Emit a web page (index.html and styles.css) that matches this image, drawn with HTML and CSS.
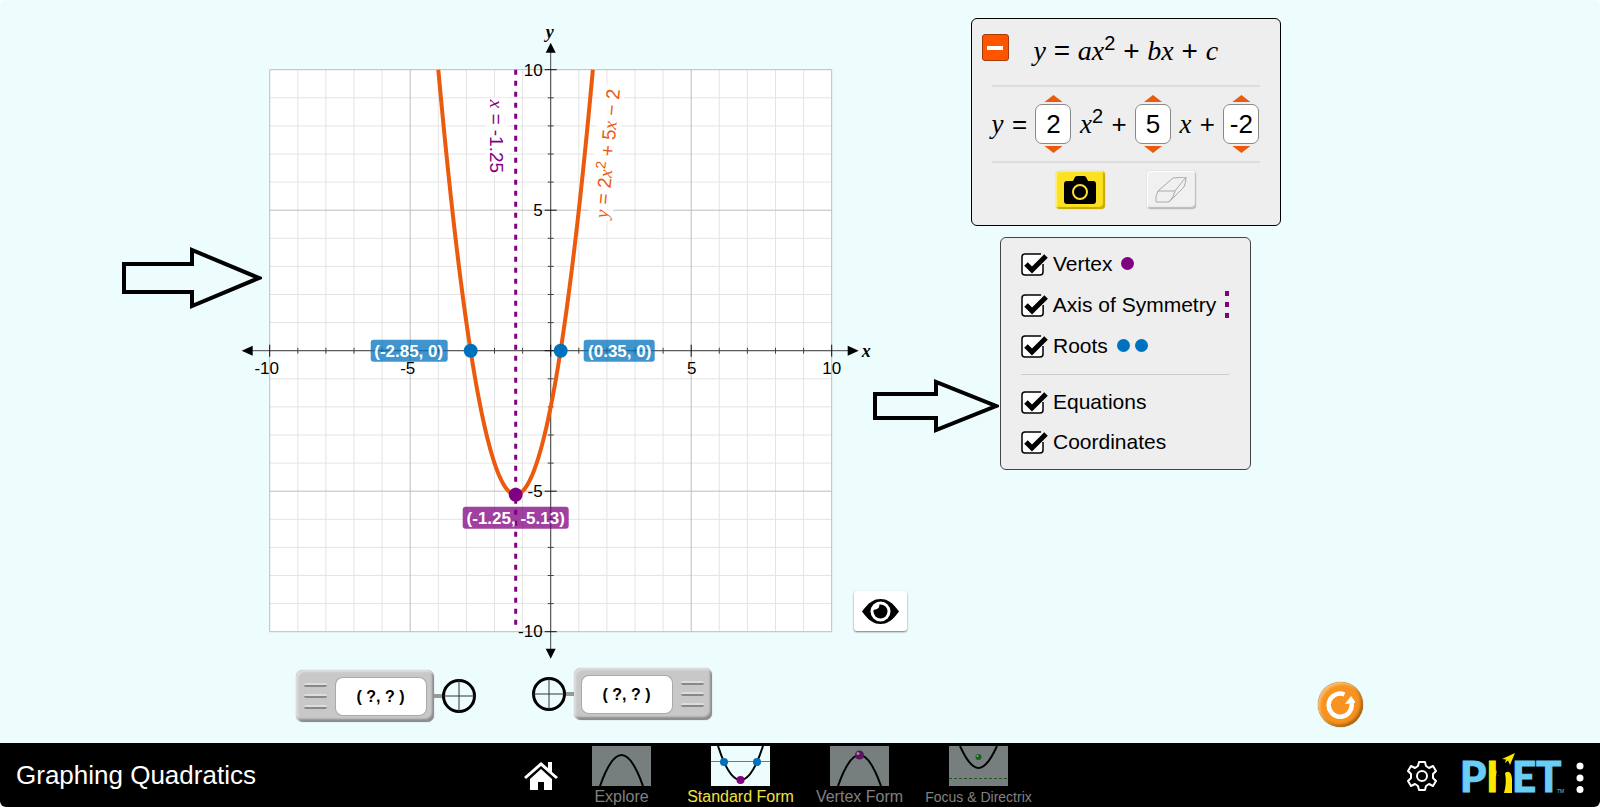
FILE: index.html
```html
<!DOCTYPE html>
<html lang="en">

<head>
    <meta charset="UTF-8">
    <meta name="viewport" content="width=device-width, initial-scale=1.0">
    <title>Graphing Quadratics</title>
    <link rel="stylesheet" href="styles.css">
</head>

<body>

    <main class="sim">
        <section class="graph-area">
            <svg class="graph" width="616" height="648" role="img" aria-label="Graph of y = 2x² + 5x − 2">
                <g transform="translate(312.7 330.7)">
                    <rect class="plot" x="-281" y="-281" width="562" height="562" />
                    <path class="grid-minor" id="gridMinor" />
                    <path class="grid-major" id="gridMajor" />
                    <path class="axis" d="M-301 0H301M0 -301V301" />
                    <path class="axis" id="ticks" />
                    <path class="major-tick" id="majorTicks" />
                    <path d="M-309 0l11 -5v10zM308 0l-11 -5v10zM0 -308l-5 10h10zM0 308l-5 -10h10z" />
                    <g class="numbers">
                        <text x="-284" y="23" text-anchor="middle">-10</text>
                        <text x="-143" y="23" text-anchor="middle">-5</text>
                        <text x="141" y="23" text-anchor="middle">5</text>
                        <text x="281" y="23" text-anchor="middle">10</text>
                        <text x="-8" y="-275" text-anchor="end">10</text>
                        <text x="-8" y="-135" text-anchor="end">5</text>
                        <text x="-8" y="146" text-anchor="end">-5</text>
                        <text x="-8" y="286" text-anchor="end">-10</text>
                    </g>
                    <text class="axis-name" x="311" y="6">x</text>
                    <text class="axis-name" x="-5" y="-313">y</text>
                    <path class="curve" id="curve" />
                    <path class="symmetry" d="M-35 -281V277" />
                    <g transform="translate(-61 -251) rotate(90)">
                        <rect class="label-back" x="-2" y="-18" width="78" height="22" />
                        <text class="symmetry-text"><tspan class="var">x</tspan> = -1.25</text>
                    </g>
                    <g transform="translate(57 -132) rotate(-84.6)">
                        <rect class="label-back" x="-2" y="-20" width="136" height="25" />
                        <text class="curve-text"><tspan class="var">y</tspan> = 2<tspan class="var">x</tspan><tspan class="sup" dy="-7">2</tspan><tspan dy="7"> + 5</tspan><tspan class="var">x</tspan> − 2</text>
                    </g>
                    <circle class="root" cx="-80" cy="0" r="7" />
                    <circle class="root" cx="10" cy="0" r="7" />
                    <circle class="vertex" cx="-35" cy="144" r="7" />
                    <g class="coords">
                        <rect class="root-back" x="-180" y="-11" width="77" height="22" rx="3" />
                        <text x="-142" y="6">(-2.85, 0)</text>
                        <rect class="root-back" x="33" y="-11" width="71" height="22" rx="3" />
                        <text x="69" y="6">(0.35, 0)</text>
                        <rect class="vertex-back" x="-88" y="156" width="106" height="22" rx="3" />
                        <text x="-35" y="173">(-1.25, -5.13)</text>
                    </g>
                </g>
            </svg>
            <svg class="pointer pointer-graph" width="142" height="62">
                <path d="M4 17H72V3L139 31L72 59V45H4z" />
            </svg>

            <div class="sensors">
                <div class="sensor">
                    <div class="sensor-body">
                        <div class="grip"><i></i><i></i><i></i></div>
                        <div class="screen">( ?, ? )</div>
                    </div>
                    <div class="stem"></div>
                    <svg width="34" height="34"><circle cx="17" cy="17" r="15.500" /><path d="M1 17H33M17 1V33" /></svg>
                </div>
                <div class="sensor flipped">
                    <div class="sensor-body">
                        <div class="grip"><i></i><i></i><i></i></div>
                        <div class="screen">( ?, ? )</div>
                    </div>
                    <div class="stem"></div>
                    <svg width="34" height="34"><circle cx="17" cy="17" r="15.500" /><path d="M1 17H33M17 1V33" /></svg>
                </div>
            </div>
        </section>

        <button class="eye" type="button" aria-label="Hide curves">
            <svg width="37" height="25" viewBox="0 0 37 25">
                <path d="M0 12.500C7 3 12 0 18.500 0S30 3 37 12.500C30 22 25 25 18.500 25S7 22 0 12.500z" />
                <circle cx="18.500" cy="12.500" r="10" fill="#fff" />
                <circle cx="18.500" cy="12.500" r="7" />
                <path d="M11 11A7 7 0 0 1 17 5Q19 10 11 11z" fill="#fff" />
            </svg>
        </button>

        <section class="controls">
            <div class="panel equation-panel">
                <div class="formula">
                    <button class="collapse" type="button" aria-label="Collapse"></button>
                    <p class="standard"><i>y</i> = <i>ax</i><sup>2</sup> + <i>bx</i> + <i>c</i></p>
                </div>
                <div class="values">
                    <i>y</i><span>=</span>
                    <div class="picker">
                        <button class="up" type="button" aria-label="Increase a"></button>
                        <input type="text" value="2" aria-label="a">
                        <button class="down" type="button" aria-label="Decrease a"></button>
                    </div>
                    <span class="square"><i>x</i><sup>2</sup></span><span>+</span>
                    <div class="picker">
                        <button class="up" type="button" aria-label="Increase b"></button>
                        <input type="text" value="5" aria-label="b">
                        <button class="down" type="button" aria-label="Decrease b"></button>
                    </div>
                    <i>x</i><span>+</span>
                    <div class="picker">
                        <button class="up" type="button" aria-label="Increase c"></button>
                        <input type="text" value="-2" aria-label="c">
                        <button class="down" type="button" aria-label="Decrease c"></button>
                    </div>
                </div>
                <div class="actions">
                    <button class="camera" type="button" aria-label="Save curve">
                        <svg width="32" height="28" viewBox="0 0 32 28">
                            <path d="M3 5h6l2-4q1-1 2-1h7q1 0 2 1l2 4h5q3 0 3 3v17q0 3-3 3H3q-3 0-3-3V8q0-3 3-3z" />
                            <circle cx="16" cy="16" r="7" fill="none" stroke="#fd3" stroke-width="2" />
                        </svg>
                    </button>
                    <button class="eraser" type="button" aria-label="Erase curve">
                        <svg width="32" height="26" viewBox="0 0 32 26">
                            <path d="M3 14L18 1L31 0L20 14z M3 14Q0 19 1 25L14 25Q19 20 20 14 M14 25L29 10Q31 5 31 0" />
                        </svg>
                    </button>
                </div>
            </div>

            <div class="panel options">
                <svg class="pointer pointer-options" width="127" height="54">
                    <path d="M3 15H64V3L124 27L64 51V39H3z" />
                </svg>
                <label><input type="checkbox" checked>Vertex <span class="dot purple"></span></label>
                <label><input type="checkbox" checked>Axis of Symmetry <span class="dash"></span></label>
                <label><input type="checkbox" checked>Roots <span class="dot"></span><span class="dot"></span></label>
                <hr>
                <label><input type="checkbox" checked>Equations</label>
                <label><input type="checkbox" checked>Coordinates</label>
            </div>
        </section>

        <button class="reset" type="button" aria-label="Reset all">
            <svg width="30" height="30" viewBox="0 0 30 30">
                <path d="M19.500 4.500A11.500 11.500 0 1 0 26.500 13" fill="none" stroke="#fff" stroke-width="4.500" />
                <path d="M20 14L26 6L31 13z" fill="#fff" />
            </svg>
        </button>
    </main>

    <footer class="navbar">
        <h1>Graphing Quadratics</h1>
        <nav>
            <a class="home" href="#home" aria-label="Home">
                <svg width="34" height="28" viewBox="0 0 34 28">
                    <path d="M17 7L28 17V28H20V20H14V28H6V17z" />
                    <path d="M0 15L17 0L24 6V0H28V10L34 15L32 17L17 4L2 17z" />
                </svg>
            </a>
            <a class="screen-link" href="#explore">
                <svg width="59" height="40"><path class="line" d="M8 40Q19 9 29.500 9T51 40" /></svg>
                <span>Explore</span>
            </a>
            <a class="screen-link active" href="#standard">
                <svg width="59" height="40">
                    <path d="M0 15.500H59" stroke="#777" />
                    <path class="line" d="M7 0Q18 34 29.500 34T52 0" />
                    <circle cx="13" cy="16" r="4" fill="#0071bd" />
                    <circle cx="46" cy="16" r="4" fill="#0071bd" />
                    <circle cx="29.500" cy="34" r="4" fill="purple" />
                </svg>
                <span>Standard Form</span>
            </a>
            <a class="screen-link" href="#vertex">
                <svg width="59" height="40">
                    <path class="line" d="M8 40Q19 9 29.500 9T51 40" />
                    <circle cx="29.500" cy="9" r="4.500" fill="#5b1459" />
                    <circle cx="28" cy="7.500" r="1.500" fill="#a78aa7" />
                </svg>
                <span>Vertex Form</span>
            </a>
            <a class="screen-link small" href="#focus">
                <svg width="59" height="40">
                    <path class="line" d="M11 0Q21 22 29.500 22T48 0" />
                    <path d="M0 32.500H59" stroke="#1d551d" stroke-dasharray="3 2" />
                    <circle cx="29.500" cy="11" r="3" fill="#1c5e1c" />
                    <circle cx="28.500" cy="10" r="1" fill="#8aa68a" />
                </svg>
                <span>Focus &amp; Directrix</span>
            </a>
        </nav>
        <div class="tools">
            <button type="button" aria-label="Preferences">
                <svg width="30" height="30" viewBox="-15 -15 30 30" fill="none" stroke="#fff" stroke-width="2" stroke-linejoin="round">
                    <path d="M-3 -14H3L4 -10L7 -8L11 -10L14 -5L11 -2V2L14 5L11 10L7 8L4 10L3 14H-3L-4 10L-7 8L-11 10L-14 5L-11 2V-2L-14 -5L-11 -10L-7 -8L-4 -10z" />
                    <circle r="5" />
                </svg>
            </button>
            <button class="brand" type="button" aria-label="PhET menu">
                <svg width="126" height="62" viewBox="-4 -8 126 62">
                    <g class="logo">
                        <text x="-2" y="39">P</text>
                        <text class="logo-h" x="25" y="39">h</text>
                        <text x="50" y="39">ET</text>
                    </g>
                    <path d="M36 5H52V13Q44 14 46 22L43 41H36Q41 28 37 22L34 24Z" fill="#000" />
                    <path d="M43 20Q49 16 50 26V40H42Q45 30 43 20z" fill="#ffe600" />
                    <path d="M40 6L53 0L48 12L46 7.500L43 10L44 6.500z" fill="#ffe600" />
                    <text class="tm" x="95" y="40">TM</text>
                    <g fill="#fff"><circle cx="118" cy="13" r="3.500" /><circle cx="118" cy="25" r="3.500" /><circle cx="118" cy="36.500" r="3.500" /></g>
                </svg>
            </button>
        </div>
    </footer>

    <script src="graph.js"></script>
</body>

</html>
```
FILE: styles.css
```css
* {
    box-sizing: border-box;
    margin: 0;
    padding: 0;
}

body {
    display: flex;
    flex-direction: column;
    min-height: 100vh;
    background: #fff;
    font-family: "Liberation Sans", Arial, sans-serif;
    color: #000;
}

button {
    border: none;
    background: none;
    cursor: pointer;
}

svg {
    display: block;
}

.sim {
    flex: 1;
    display: flex;
    justify-content: center;
    background: #edfdfd;
    border-radius: 6px 6px 0 0;
}

/* graph */

.graph-area {
    position: relative;
    width: 616px;
    padding-top: 20px;
}

.graph {
    overflow: visible;
}

.plot {
    fill: #fff;
}

.grid-minor,
.grid-major,
.axis,
.major-tick,
.curve,
.symmetry {
    fill: none;
}

.grid-minor {
    stroke: #e4e4e4;
}

.grid-major {
    stroke: #bdbdbd;
}

.axis {
    stroke: #444;
}

.major-tick {
    stroke: #111;
}

.numbers {
    font-size: 17px;
}

.axis-name {
    font: italic bold 18px "Liberation Serif", serif;
}

.curve {
    stroke: #ec5a0e;
    stroke-width: 4;
}

.symmetry {
    stroke: purple;
    stroke-width: 3;
    stroke-dasharray: 5 6;
}

.label-back {
    fill: rgba(255, 255, 255, 0.75);
}

.symmetry-text,
.curve-text {
    font-size: 19px;
}

.symmetry-text {
    fill: purple;
}

.curve-text {
    fill: #ec5a0e;
}

.var {
    font-family: "Liberation Serif", serif;
    font-style: italic;
}

.sup {
    font-size: 14px;
}

.root {
    fill: #0071bd;
}

.vertex {
    fill: purple;
}

.root-back {
    fill: rgba(0, 113, 189, 0.75);
}

.vertex-back {
    fill: rgba(128, 0, 128, 0.75);
}

.coords {
    fill: #fff;
    font-size: 17px;
    font-weight: bold;
    text-anchor: middle;
}

.pointer {
    position: absolute;
    fill: none;
    stroke: #000;
    stroke-width: 4;
}

.pointer-graph {
    left: -118px;
    top: 247px;
}

/* point tools */

.sensors {
    display: flex;
    gap: 56px;
    padding-left: 58px;
}

.sensor {
    display: flex;
    align-items: center;
    margin-top: 2px;
}

.flipped {
    flex-direction: row-reverse;
    margin-top: 0;
    margin-bottom: 2px;
}

.sensor-body {
    display: flex;
    align-items: center;
    justify-content: space-between;
    width: 138px;
    height: 52px;
    padding: 0 8px;
    border-radius: 7px;
    background: #c8c8c8;
    box-shadow: inset 2px 2px 2px #ddd, inset -2px -3px 2px #8d8d8d, 0 0 1px #888;
}

.flipped .sensor-body {
    flex-direction: row-reverse;
}

.grip {
    display: flex;
    flex-direction: column;
    gap: 7px;
}

.grip i {
    width: 23px;
    height: 4px;
    border-radius: 2px;
    background: #ddd;
    border-bottom: 2px solid #888;
}

.screen {
    width: 90px;
    height: 37px;
    border-radius: 7px;
    background: #fff;
    box-shadow: 0 0 0 1px #aaa;
    font-size: 16px;
    font-weight: bold;
    line-height: 37px;
    text-align: center;
}

.stem {
    width: 8px;
    height: 4px;
    background: #999;
}

.sensor circle {
    fill: none;
    stroke: #000;
    stroke-width: 3;
}

.sensor path {
    stroke: #333;
}

.eye {
    display: flex;
    align-items: center;
    justify-content: center;
    align-self: flex-end;
    width: 53px;
    height: 40px;
    margin: 0 64px 112px 0;
    border-radius: 3px;
    background: #fff;
    box-shadow: 0 1px 2px #777;
}

/* panels */

.controls {
    display: flex;
    flex-direction: column;
    align-items: center;
    gap: 11px;
    width: 310px;
    padding-top: 18px;
}

.panel {
    background: #eee;
    border: 1px solid #000;
    border-radius: 6px;
}

.equation-panel {
    width: 100%;
    height: 208px;
    padding: 0 20px;
    font-size: 26px;
}

.equation-panel i {
    font-family: "Liberation Serif", serif;
    font-size: 27px;
}

.equation-panel sup {
    font-size: 20px;
    line-height: 0;
}

.formula {
    display: flex;
    height: 68px;
    padding-top: 15px;
    border-bottom: 2px solid #ddd;
}

.collapse {
    width: 27px;
    height: 27px;
    margin-left: -10px;
    border: 1px solid #a33c08;
    border-radius: 3px;
    background: #ff5500 linear-gradient(#fff, #fff) center / 16px 4px no-repeat;
}

.equation-panel .standard,
.standard i {
    font-size: 28px;
}

.standard {
    margin-left: 25px;
    line-height: 34px;
}

.values {
    display: flex;
    align-items: center;
    justify-content: space-between;
    height: 76px;
    border-bottom: 2px solid #ddd;
}

.picker {
    display: flex;
    flex-direction: column;
    align-items: center;
    gap: 2px;
}

.picker input {
    width: 36px;
    height: 40px;
    border: 1px solid #888;
    border-radius: 7px;
    background: #fff;
    font: 26px "Liberation Sans", Arial, sans-serif;
    text-align: center;
}

.up,
.down {
    width: 18px;
    height: 7px;
    background: #ec5a0e;
    clip-path: polygon(50% 0, 100% 100%, 0 100%);
}

.down {
    clip-path: polygon(0 0, 100% 0, 50% 100%);
}

.actions {
    display: flex;
    justify-content: center;
    gap: 42px;
    padding-top: 8px;
}

.actions button {
    display: flex;
    align-items: center;
    justify-content: center;
    width: 49px;
    height: 38px;
    border-radius: 4px;
    background: #f0f0f0;
    box-shadow: inset 1px 1px 1px #fff, inset -1px -2px 1px #bbb, 0 0 1px #999;
}

.actions .camera {
    background: #fbe122;
    box-shadow: inset 1px 1px 1px #fff27a, inset -2px -2px 1px #c8ac08, 0 0 1px #a6942c;
}

.eraser path {
    fill: none;
    stroke: #aaa;
}

.options {
    position: relative;
    display: flex;
    flex-direction: column;
    width: 251px;
    height: 233px;
    padding: 5px 21px 0 20px;
    border-color: #444;
}

.options label {
    display: flex;
    align-items: center;
    height: 41px;
    font-size: 21px;
    white-space: pre;
}

.options input {
    appearance: none;
    width: 27px;
    height: 24px;
    margin-right: 5px;
    background: url("data:image/svg+xml,%3Csvg xmlns='http://www.w3.org/2000/svg' width='27' height='24'%3E%3Cpath d='M20 2H4Q1 2 1 5V20Q1 23 4 23H19Q22 23 22 20V12' fill='%23fff' stroke='%23000' stroke-width='1.500'/%3E%3Cpath d='M5 12L11 18L25 4' fill='none' stroke='%23000' stroke-width='5'/%3E%3C/svg%3E");
}

.options hr {
    height: 1px;
    margin: 8px 0 7px;
    border: none;
    background: #ccc;
}

.options hr ~ label {
    height: 40px;
}

.dot {
    width: 13px;
    height: 13px;
    margin: 0 2px 0 3px;
    border-radius: 50%;
    background: #0071bd;
}

.purple {
    background: purple;
}

.dash {
    width: 4px;
    height: 27px;
    margin-left: 3px;
    background: repeating-linear-gradient(purple 0 5px, transparent 5px 11px);
}

.pointer-options {
    right: 251px;
    top: 141px;
}

.reset {
    display: flex;
    align-items: center;
    justify-content: center;
    align-self: flex-end;
    width: 45px;
    height: 45px;
    margin: 0 0 16px 37px;
    border-radius: 50%;
    background: #f7931e;
    box-shadow: inset 2px 2px 3px #fbc07c, inset -2px -2px 3px #a8620f, 0 0 1px #5a3508;
}

/* navigation bar */

.navbar {
    position: relative;
    display: grid;
    grid-template-columns: 1fr auto 1fr;
    height: 64px;
    padding: 1px 16px 0;
    border-radius: 0 0 6px 6px;
    background: #000;
    color: #fff;
}

.navbar h1 {
    font-size: 26px;
    font-weight: normal;
    line-height: 63px;
}

.navbar nav {
    display: flex;
    padding-right: 38px;
}

.home {
    align-self: center;
    margin-right: 4px;
    fill: #fff;
}

.screen-link {
    display: flex;
    flex-direction: column;
    align-items: center;
    gap: 2px;
    width: 119px;
    padding-top: 2px;
    color: #808080;
    font-size: 16px;
    line-height: 18px;
    text-decoration: none;
    white-space: nowrap;
}

.screen-link svg {
    background: #777e7e;
}

.screen-link.active {
    color: #f2e23f;
}

.active svg {
    background: #edfdfd;
}

.screen-link.small {
    font-size: 14px;
}

.line {
    fill: none;
    stroke: #000;
    stroke-width: 2;
}

.tools {
    display: flex;
    align-items: center;
    justify-content: flex-end;
    gap: 21px;
}

.logo {
    fill: #6acdf5;
    stroke: #6acdf5;
    font: 900 42px Lato, sans-serif;
}

.logo-h {
    fill: #ffe600;
    stroke: #ffe600;
}

.tm {
    fill: #6acdf5;
    font-size: 5px;
}
```
FILE: graph.js
```js
var unit = 28.1;
var minor = "", major = "", ticks = "", majorTicks = "";

for (var i = -10; i <= 10; i++) {
    var p = i * unit;
    var lines = "M" + p + " -281V281M-281 " + p + "H281";
    if (i % 5 === 0) {
        major += lines;
        majorTicks += "M" + p + " -6V6M-6 " + p + "H6";
    } else {
        minor += lines;
        ticks += "M" + p + " -3V3M-3 " + p + "H3";
    }
}

// y = 2x^2 + 5x - 2, between the two points where y = 10
var points = [];
for (var x = -4; x <= 1.5; x += 0.05) {
    points.push(x * unit + " " + -(2 * x * x + 5 * x - 2) * unit);
}
points.push(1.5 * unit + " " + -10 * unit);

document.getElementById("gridMinor").setAttribute("d", minor);
document.getElementById("gridMajor").setAttribute("d", major);
document.getElementById("ticks").setAttribute("d", ticks);
document.getElementById("majorTicks").setAttribute("d", majorTicks);
document.getElementById("curve").setAttribute("d", "M" + points.join("L"));
```
